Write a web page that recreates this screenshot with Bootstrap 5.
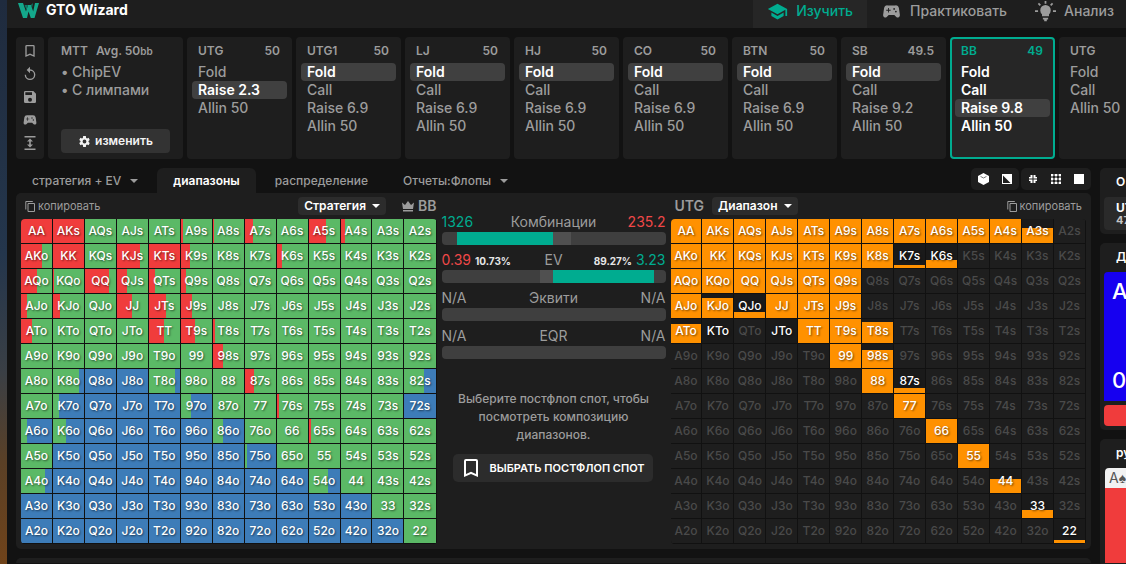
<!DOCTYPE html>
<html lang="ru">
<head>
<meta charset="utf-8">
<meta name="viewport" content="width=device-width, initial-scale=1">
<title>GTO Wizard</title>
<link rel="stylesheet" href="https://cdn.jsdelivr.net/npm/bootstrap@5.3.0/dist/css/bootstrap.min.css">
<style>
:root{--panel:#1e1e1e;--page:#121212;--muted:#9c9c9c;--teal:#00ac90;--red:#f03c3c;--green:#5bb966;--blue:#3d7cb8;--orange:#ff9100}
body{background:var(--page);color:var(--muted);font-family:Inter,"Liberation Sans",sans-serif;font-size:14px;line-height:18px}
button{font:inherit;color:inherit;background:none;border:0;padding:0}
a{color:inherit;text-decoration:none}
svg{display:block;fill:currentColor;flex:none}
.desk-edge{flex:0 0 7px;background:linear-gradient(#1f2b3e,#24364c 45%,#3a3f45 66%,#5a4026 82%,#70431a)}
.app{min-width:0}
.topbar{height:28px;background:var(--panel)}
.brand{padding:0 0 8px 11px;gap:7px;color:#fff;font-weight:700;font-size:14px}
.topnav a{padding:0 14px 6px;gap:8px;font-size:14px;font-weight:500}
.topnav a.active{background:#262626;color:var(--teal)}
.spots{padding:9px 0 0 9px;gap:4px}
.box{background:var(--panel);border-radius:4px;flex:none;height:122px}
.tools{width:28px;padding:6px 0 8px}
.mtt{width:135px;padding:0 13px 6px}
.spot{width:105px;padding:0 5px}
.spot.active{background:#262626;border:2px solid var(--teal);padding:0 3px}
.spot.active .spot-head{color:var(--teal);margin-top:-2px}
.spot-head{height:26px;line-height:28px;font-size:12px;font-weight:600;padding:0 7px 0 6px}
.act{display:block;width:100%;text-align:left;padding:0 6px;height:18px;border-radius:4px;font-weight:500}
.spot.active .act{color:#fff;font-weight:600}
.act.chosen{background:#404040;color:#fff;font-weight:600}
.edit{background:#333;color:#f2f2f2;font-weight:600;font-size:12px;height:24px;border-radius:4px;gap:4px}
.unit{font-size:10px}
.mtt ul{margin:0;padding:0 0 0 11px;list-style:none;font-weight:500}
.mtt li::before{content:"•";margin-left:-11px;display:inline-block;width:11px}
.workspace{padding:9px 0 0 9px;gap:9px}
.tabs{gap:3px}
.tabs button{padding:0 16px;height:25px;font-size:12px;font-weight:500;border-radius:6px 6px 0 0}
.tabs button.active{background:var(--panel);color:#fff;font-weight:600}
.caret{display:inline-block;border:4px solid transparent;border-top-color:currentColor;border-bottom:0;margin-left:9px;vertical-align:2px}
.viewset{background:var(--panel);height:22px;border-radius:5px;color:#fff;padding:0 7px;gap:13px}
.board{background:var(--panel);padding:0 5px 5px;border-radius:5px}
.grid-head{height:26px}
.copy{font-size:11px;gap:2px}
.picker{background:#2c2c2c;color:#fff;font-weight:600;font-size:12px;height:18px;border-radius:4px;padding:0 6px}
.picker .caret{margin-left:6px}
.seat{font-weight:600}
.range-col{flex:416 1 0;min-width:0}
.mid-col{flex:0 0 234px;padding:19px 5px 0}
.matrix{width:100%;table-layout:fixed;border-collapse:separate;border-spacing:0;background:#111;border-radius:4px;overflow:hidden}
.matrix td{height:25px;padding:0;text-align:center;font-size:12px;line-height:24px;font-weight:500;border-right:1px solid #111;border-bottom:1px solid #111;background-clip:padding-box;color:#fff;text-shadow:1px 1px 2px rgba(0,0,0,.55)}
.matrix td.off{color:#4a4a4a;background-color:var(--panel);text-shadow:none}
.stat{height:38px}
.teal{color:var(--teal)}
.rose{color:#f04848}
.stat small{font-size:10px;font-weight:700;color:#e6e6e6}
.stat-line{height:20px;line-height:20px}
.stat-line>*{flex:1}
.progress{--bs-progress-height:13px;--bs-progress-bg:#3f3f3f;--bs-progress-border-radius:4px}
.tone{background:#505050}
.gone{background:transparent}
.fill{background:var(--teal)}
.hint{font-size:12px;font-weight:500;line-height:18px;padding:0 8px;margin:26px 0 10px;text-align:center}
.pick{background:#2c2c2c;color:#fff;font-size:11px;font-weight:600;height:28px;border-radius:5px;gap:10px;padding:0 8px 0 9px;margin:0 11px;white-space:nowrap}
.side{flex:0 0 26px;gap:9px;overflow:hidden;color:#fff}
.side section{background:var(--panel);border-radius:5px 0 0 5px;padding:0 0 4px 4px;white-space:nowrap}
.side h2{font-size:12px;font-weight:600;margin:0;padding-left:12px;height:29px;line-height:27px}
.seatbox{background:#2a2a2a;border-radius:4px 0 0 4px;height:33px;line-height:13px;padding:4px 0 0 12px;font-size:12px;font-weight:700}
.seatbox div+div{color:#c4c4c4;font-size:11px}
.allin{background:#1600f0;border-radius:4px 0 0 0;height:129px;padding:8px 0 10px 8px;font-size:22px;line-height:22px;font-weight:500}
.redbar{background:var(--red);height:21px;margin-top:4px;border-radius:4px 0 0 4px}
.hand{background:#f2f2f2;color:#555;height:20px;line-height:20px;padding-left:4px;border-radius:4px 0 0 0;margin-left:1px}
.handfill{background:var(--red);height:75px;margin-left:1px}
.nextpanel{background:var(--panel);border-radius:5px 5px 0 0;height:5px;margin-top:9px}
</style>
</head>
<body>
<div class="d-flex vh-100 overflow-hidden">
<div class="desk-edge"></div>
<div class="app flex-grow-1 overflow-hidden">
<header class="topbar d-flex justify-content-between">
  <a href="#" class="brand d-flex align-items-center"><svg width="21" height="15" viewBox="0 0 21 15"><path fill="#14a88b" d="M0 0h5l3 8.500L10 2h3l2.200 6.500L17 0h4l-4.500 15h-3.700l-2.300-6.500L9 15H5z"/><path fill="#0c7d68" d="M6.500 2H10L8.500 7zM13 2l2-2-1 5z"/></svg>GTO Wizard</a>
  <nav class="topnav d-flex">
    <a href="#" class="active d-flex align-items-center"><svg width="21" height="21" viewBox="0 0 24 24"><path d="M5 13.200v4L12 21l7-3.800v-4L12 17zM12 3 1 9l11 6 9-4.900V17h2V9z"/></svg>Изучить</a>
    <a href="#" class="d-flex align-items-center"><svg width="21" height="21" viewBox="0 0 24 24"><path d="M21.600 16.100 20.500 8.300A4 4 0 0 0 16.500 5h-9a4 4 0 0 0-4 3.300l-1.100 7.800A2.500 2.500 0 0 0 6.500 18.300L8.800 16h6.400l2.300 2.300a2.500 2.500 0 0 0 4.100-2.200zM11 11H9v2H8v-2H6v-1h2V8h1v2h2zm4-1a1 1 0 1 1 0-2 1 1 0 0 1 0 2zm2 3a1 1 0 1 1 0-2 1 1 0 0 1 0 2z"/></svg>Практиковать</a>
    <a href="#" class="d-flex align-items-center pe-2 me-1"><svg width="21" height="21" viewBox="0 0 24 24"><path d="M8 17.500h8V15a6 6 0 1 0-8 0zM9 19h6v2h-1.500v2h-3v-2H9zM11 0h2v3h-2zM0 10.500h3.500v2H0zm20.500 0H24v2h-3.500zM3.200 3.500l1.400-1.400 2.200 2.200-1.400 1.400zm14 .8 2.200-2.200 1.400 1.400-2.200 2.200z"/></svg>Анализ</a>
  </nav>
</header>

<div class="spots d-flex overflow-hidden">
  <div class="box tools d-flex flex-column align-items-center justify-content-between">
    <button aria-label="Закладка"><svg width="16" height="16" viewBox="0 0 24 24"><path d="M17 3H7a2 2 0 0 0-2 2v16l7-3 7 3V5a2 2 0 0 0-2-2zm0 15-5-2.200L7 18V5h10z"/></svg></button>
    <button aria-label="Сброс"><svg width="16" height="16" viewBox="0 0 24 24"><path d="M12 5V1L7 6l5 5V7a6 6 0 1 1-6 6H4a8 8 0 1 0 8-8z"/></svg></button>
    <button aria-label="Сохранить"><svg width="16" height="16" viewBox="0 0 24 24"><path d="M17 3H5a2 2 0 0 0-2 2v14a2 2 0 0 0 2 2h14a2 2 0 0 0 2-2V7zm-5 16a3 3 0 1 1 0-6 3 3 0 0 1 0 6zm3-10H5V5h10z"/></svg></button>
    <button aria-label="Игра"><svg width="16" height="16" viewBox="0 0 24 24"><path d="M21.600 16.100 20.500 8.300A4 4 0 0 0 16.500 5h-9a4 4 0 0 0-4 3.300l-1.100 7.800A2.500 2.500 0 0 0 6.500 18.300L8.800 16h6.400l2.300 2.300a2.500 2.500 0 0 0 4.100-2.200zM11 11H9v2H8v-2H6v-1h2V8h1v2h2zm4-1a1 1 0 1 1 0-2 1 1 0 0 1 0 2zm2 3a1 1 0 1 1 0-2 1 1 0 0 1 0 2z"/></svg></button>
    <button aria-label="Высота"><svg width="14" height="16" viewBox="0 0 14 16"><path d="M1.500 1h11v1.500h-11zM1.500 13.500h11V15h-11zM7 3.500l3 3H7.800v3H10l-3 3-3-3h2.200v-3H4z"/></svg></button>
  </div>
  <div class="box mtt d-flex flex-column justify-content-between">
    <div>
      <div class="spot-head d-flex px-0 gap-2"><span>MTT</span><span>Avg. 50<span class="unit">bb</span></span></div>
      <ul><li>ChipEV</li><li>С лимпами</li></ul>
    </div>
    <button class="edit d-flex align-items-center justify-content-center"><svg width="13" height="13" viewBox="0 0 24 24"><path d="M19.400 13a7.500 7.500 0 0 0 0-2l2.300-1.700-2.200-4-2.800 1.100a8 8 0 0 0-1.700-1L14.500 2h-5L9 5.400a8 8 0 0 0-1.700 1L4.500 5.300l-2.200 4L4.600 11a7.500 7.500 0 0 0 0 2l-2.300 1.700 2.200 4 2.800-1.100a8 8 0 0 0 1.700 1l.5 3.400h5l.5-3.400a8 8 0 0 0 1.700-1l2.800 1.100 2.200-4zM12 15.500a3.500 3.500 0 1 1 0-7 3.500 3.500 0 0 1 0 7z"/></svg>изменить</button>
  </div>
  <div id="spots" class="d-flex gap-1"></div>
</div>

<div class="workspace d-flex">
  <main class="flex-grow-1 overflow-hidden">
    <div class="d-flex justify-content-between">
      <div class="tabs d-flex" role="tablist">
        <button role="tab">стратегия + EV<span class="caret"></span></button>
        <button role="tab" class="active" aria-selected="true">диапазоны</button>
        <button role="tab">распределение</button>
        <button role="tab">Отчеты:Флопы<span class="caret"></span></button>
      </div>
      <div class="d-flex" style="gap:2px">
        <div class="viewset d-flex align-items-center">
          <button aria-label="Куб"><svg width="11" height="12" viewBox="0 0 11 12"><path d="M5.500 0 11 3v6l-5.500 3L0 9V3z"/><path d="M2.500 3.400 5.500 5l3-1.600" fill="none" stroke="#777" stroke-width="1"/></svg></button>
          <button aria-label="Контраст"><svg width="10" height="10" viewBox="0 0 10 10"><path d="M0 0h10v10H0z"/><path d="M1 1.500 8.500 9H1z" fill="#1e1e1e"/></svg></button>
        </div>
        <div class="viewset d-flex align-items-center">
          <button aria-label="Компактно"><svg width="10" height="10" viewBox="0 0 10 10"><path d="M2.500 1h2v3.500H1V3h1.500zM5.500 1h2v2H9v1.500H5.500zM1 5.500h3.500V9h-2V7H1zM5.500 5.500H9V7H7.500v2h-2z"/></svg></button>
          <button aria-label="Сетка"><svg width="10" height="10" viewBox="0 0 10 10"><path d="M0 0h10v10H0z" fill="#777"/><path d="M0 0h2v2H0zM4 0h2v2H4zM8 0h2v2H8zM0 4h2v2H0zM4 4h2v2H4zM8 4h2v2H8zM0 8h2v2H0zM4 8h2v2H4zM8 8h2v2H8z"/><path d="M2 2h2v2H2zM6 2h2v2H6zM2 6h2v2H2zM6 6h2v2H6z" fill="#1e1e1e"/></svg></button>
          <button aria-label="Полный"><svg width="10" height="10" viewBox="0 0 10 10"><path d="M0 0h10v10H0z"/></svg></button>
        </div>
      </div>
    </div>
    <div class="board d-flex">
      <section class="range-col">
        <div class="grid-head d-flex align-items-center">
          <button class="copy d-flex align-items-center me-auto ms-1"><svg width="11" height="11" viewBox="0 0 11 11"><path d="M3 2.500h6.500v8H3zM.8 8.500V.5h7" fill="none" stroke="currentColor"/></svg>копировать</button>
          <button class="picker">Стратегия<span class="caret"></span></button>
          <span class="seat d-flex align-items-center ps-3"><svg width="12" height="11" viewBox="0 0 12 11" class="me-1"><path d="M0 1.500 3 4 6 0l3 4 3-2.500L11 8H1zM1 9h10v1.500H1z"/></svg>BB</span>
        </div>
        <table class="matrix" id="strategy" aria-label="Стратегия BB"></table>
      </section>
      <section class="mid-col">
        <div class="stat"><div class="stat-line d-flex"><span class="teal">1326</span><span class="text-center">Комбинации</span><span class="rose text-end">235.2</span></div>
          <div class="progress"><div class="progress-bar gone" style="width:7%"></div><div class="progress-bar fill" style="width:43%"></div><div class="progress-bar tone" style="width:8%"></div></div></div>
        <div class="stat"><div class="stat-line d-flex"><span class="text-nowrap"><span class="rose">0.39</span> <small>10.73%</small></span><span class="text-center">EV</span><span class="text-end text-nowrap"><small>89.27%</small> <span class="teal">3.23</span></span></div>
          <div class="progress"><div class="progress-bar gone" style="width:44%"></div><div class="progress-bar tone" style="width:6%"></div><div class="progress-bar fill" style="width:45%"></div></div></div>
        <div class="stat"><div class="stat-line d-flex"><span>N/A</span><span class="text-center">Эквити</span><span class="text-end">N/A</span></div><div class="progress"></div></div>
        <div class="stat"><div class="stat-line d-flex"><span>N/A</span><span class="text-center">EQR</span><span class="text-end">N/A</span></div><div class="progress"></div></div>
        <p class="hint">Выберите постфлоп спот, чтобы посмотреть композицию диапазонов.</p>
        <button class="pick d-flex align-items-center"><svg width="18" height="20" viewBox="3 2 18 20"><path d="M17 3H7a2 2 0 0 0-2 2v16l7-3 7 3V5a2 2 0 0 0-2-2zm0 15-5-2.200L7 18V5h10z"/></svg>ВЫБРАТЬ ПОСТФЛОП СПОТ</button>
      </section>
      <section class="range-col">
        <div class="grid-head d-flex align-items-center">
          <span class="seat ps-1 me-2">UTG</span>
          <button class="picker">Диапазон<span class="caret"></span></button>
          <button class="copy d-flex align-items-center ms-auto me-1"><svg width="11" height="11" viewBox="0 0 11 11"><path d="M3 2.500h6.500v8H3zM.8 8.500V.5h7" fill="none" stroke="currentColor"/></svg>копировать</button>
        </div>
        <table class="matrix" id="range" aria-label="Диапазон UTG"></table>
      </section>
    </div>
    <div class="nextpanel"></div>
  </main>
  <aside class="side d-flex flex-column">
    <section><h2>О</h2><div class="seatbox"><div>UT</div><div>47</div></div></section>
    <section><h2>Д</h2><div class="allin d-flex flex-column justify-content-between"><span>A</span><span>0</span></div><div class="redbar"></div></section>
    <section><h2>ру</h2><div class="hand">A♠</div><div class="handfill"></div></section>
  </aside>
</div>
</div>
</div>
<script>
const spots = [
  ['UTG','50',['Fold','Raise 2.3','Allin 50'],1],
  ['UTG1','50',['Fold','Call','Raise 6.9','Allin 50'],0],
  ['LJ','50',['Fold','Call','Raise 6.9','Allin 50'],0],
  ['HJ','50',['Fold','Call','Raise 6.9','Allin 50'],0],
  ['CO','50',['Fold','Call','Raise 6.9','Allin 50'],0],
  ['BTN','50',['Fold','Call','Raise 6.9','Allin 50'],0],
  ['SB','49.5',['Fold','Call','Raise 9.2','Allin 50'],0],
  ['BB','49',['Fold','Call','Raise 9.8','Allin 50'],2],
  ['UTG','',['Fold','Call','Allin 50'],-1]
];
document.getElementById('spots').innerHTML = spots.map(([seat, stack, acts, pick]) =>
  `<div class="box spot${seat === 'BB' ? ' active' : ''}"><div class="spot-head d-flex justify-content-between"><span>${seat}</span><span>${stack}</span></div>` +
  acts.map((a, i) => `<button class="act${i === pick ? ' chosen' : ''}">${a}</button>`).join('') + '</div>').join('');

const ranks = 'AKQJT98765432';
const hand = (r, c) => r === c ? ranks[r] + ranks[c] : r < c ? ranks[r] + ranks[c] + 's' : ranks[c] + ranks[r] + 'o';
function matrix(id, cell) {
  document.getElementById(id).innerHTML = [...ranks].map((_, r) =>
    '<tr>' + [...ranks].map((_, c) => cell(hand(r, c))).join('') + '</tr>').join('');
}
// share of raise, in percent; the rest of the hand calls
const raise = {AA:100,AKs:100,KK:100,KTs:100,A9s:6,A8s:3,A7s:25,A5s:54,A4s:13,AKo:67,KJs:73,K9s:28,K6s:16,
  AQo:53,KQo:3,QQ:78,QJs:32,QTs:18,Q9s:15,AJo:18,KJo:23,JJ:48,JTs:54,J9s:37,ATo:36,TT:48,T9s:45,T8s:5,
  '98s':32,'87s':30,'76s':7,'65s':7};
// share of call, in percent; the rest of the hand folds
const call = {K8o:83,T8o:83,'82s':64,K7o:20,'97o':32,A6o:20,K6o:42,'86o':32,'75o':8,A4o:76,'54o':60};
'Q8o J8o Q7o J7o T7o 72s Q6o J6o T6o 96o K5o Q5o J5o T5o 95o 85o K4o Q4o J4o T4o 94o 84o 74o 64o A3o K3o Q3o J3o T3o 93o 83o 73o 63o 53o 43o A2o K2o Q2o J2o T2o 92o 82o 72o 62o 52o 42o 32o'
  .split(' ').forEach(h => call[h] = 0);
matrix('strategy', h => {
  const folds = h in call, at = folds ? call[h] : (raise[h] || 0);
  const [a, b] = folds ? ['green', 'blue'] : ['red', 'green'];
  return `<td style="background-image:linear-gradient(90deg,var(--${a}) ${at}%,var(--${b}) ${at}%)">${h}</td>`;
});
// share of each hand that stays in the range
const held = {A3s:62,K7s:12,K6s:33,KJo:82,QJo:25,ATo:78,KTo:0,JTo:0,T8s:86,'98s':74,'87s':20,44:58,33:33,22:12};
'AA AKs AQs AJs ATs A9s A8s A7s A6s A5s A4s AKo KK KQs KJs KTs K9s K8s AQo KQo QQ QJs QTs Q9s AJo JJ JTs J9s TT T9s 99 88 77 66 55'
  .split(' ').forEach(h => held[h] = 100);
matrix('range', h => h in held
  ? `<td style="background-image:linear-gradient(0deg,var(--orange) ${held[h]}%,#1a1a1a ${held[h]}%)">${h}</td>`
  : `<td class="off">${h}</td>`);
</script>
<script src="https://cdn.jsdelivr.net/npm/bootstrap@5.3.0/dist/js/bootstrap.bundle.min.js"></script>
</body>
</html>
